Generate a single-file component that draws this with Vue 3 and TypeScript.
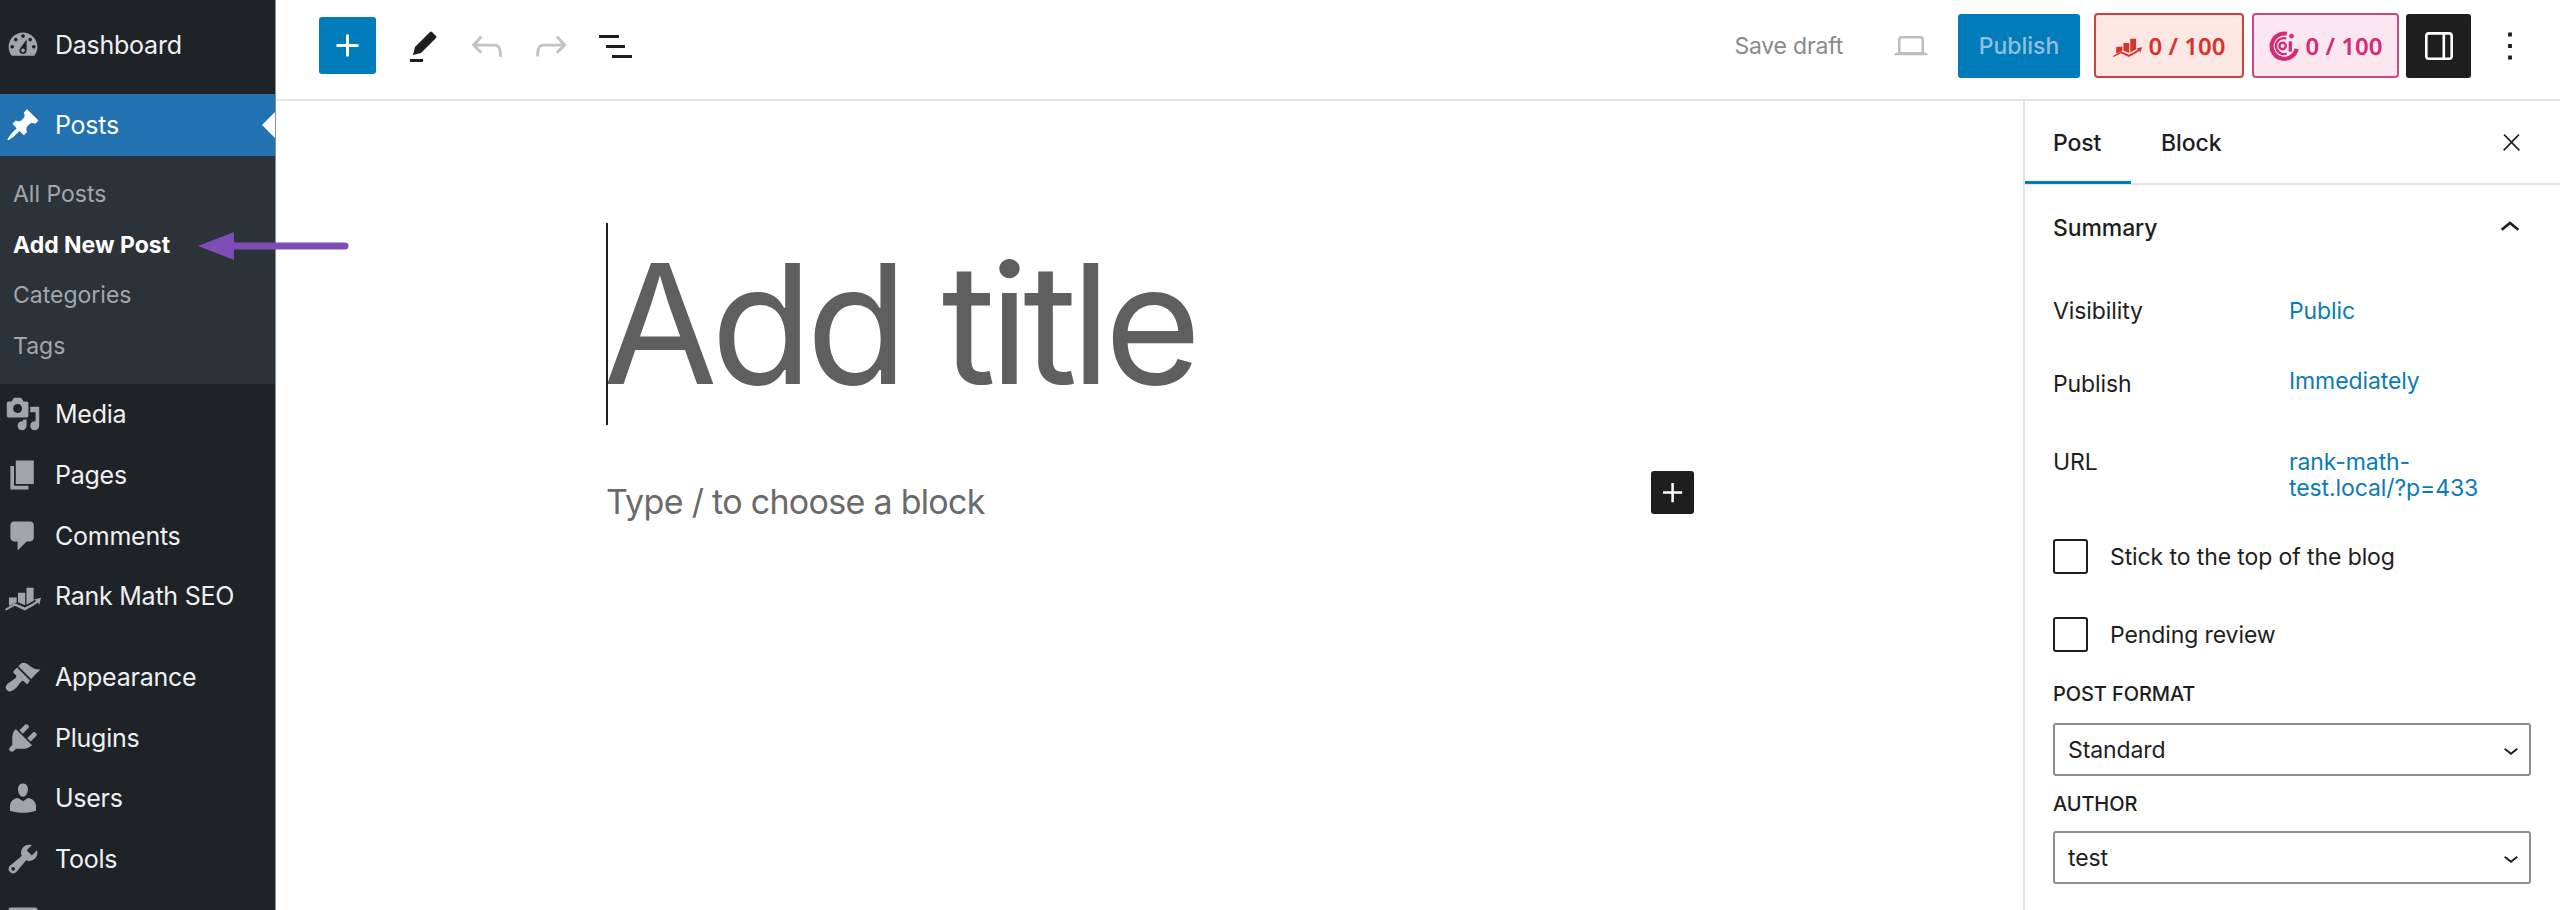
<script setup lang="ts">
interface MenuItem {
  label: string
  path: string
}

const rankPath =
  'M0 17.2L5.500 14l5.500 2.400L15.600 14l1.700-1.400-1.300-.600 4-1-1 4-.8-1.400-2.400 1.800L11 18l-5.500-2.600L.5 18zM2.200 10.900h4.300v2.600l-4.300 2zM7.200 8.200h4v7l-4-1.700zM11.900 5.400h4v7.200l-4 2.200z'

const groupA: MenuItem[] = [
  {
    label: 'Media',
    path: 'M13 11V4c0-.55-.45-1-1-1h-1.67L9 1H5L3.67 3H2c-.55 0-1 .45-1 1v7c0 .55.45 1 1 1h10c.55 0 1-.45 1-1zM7 4.5c1.38 0 2.5 1.12 2.5 2.5S8.38 9.5 7 9.5 4.5 8.38 4.5 7 5.62 4.5 7 4.5zM14 6h5v10.5c0 1.38-1.12 2.5-2.5 2.5S14 17.88 14 16.5s1.12-2.5 2.5-2.5c.17 0 .34.02.5.05V9h-3V6zm-4 8.05V13h2v3.5c0 1.38-1.12 2.5-2.5 2.5S7 17.88 7 16.5 8.12 14 9.500 14c.17 0 .34.02.5.05z',
  },
  { label: 'Pages', path: 'M6 15V2h10v13H6zm-1 1h8v2H3V5h2v11z' },
  {
    label: 'Comments',
    path: 'M5 2h9c1.1 0 2 .9 2 2v7c0 1.1-.9 2-2 2h-2l-5 5v-5H5c-1.1 0-2-.9-2-2V4c0-1.1.9-2 2-2z',
  },
  { label: 'Rank Math SEO', path: rankPath },
]

const groupB: MenuItem[] = [
  {
    label: 'Appearance',
    path: 'M14.48 11.06L7.41 3.99l1.5-1.5c.5-.56 2.3-.47 3.51.32 1.21.8 1.43 1.28 2.91 2.1 1.18.64 2.45 1.26 4.45.85zm-.71.71L6.7 4.7 4.93 6.47c-.39.39-.39 1.02 0 1.41l1.06 1.06c.39.39.39 1.03 0 1.42-.6.6-1.43 1.11-2.21 1.69-.35.26-.7.53-1.01.84C1.43 13.23.4 14.99.4 16c0 .47.27.97.66 1.37s.9.66 1.37.66c1.01 0 2.77-1.03 4.11-2.37.31-.31.58-.66.84-1.01.58-.78 1.09-1.61 1.69-2.21.39-.39 1.03-.39 1.42 0l1.06 1.06c.39.39 1.02.39 1.41 0z',
  },
  {
    label: 'Plugins',
    path: 'M13.11 4.36L9.87 7.6 8 5.73l3.24-3.24c.35-.34 1.05-.2 1.56.32.52.51.66 1.21.31 1.55zm-8 1.77l.91-1.12 9.01 9.01-1.19.84c-.71.71-2.63 1.16-3.82 1.16H6.14L4.9 17.26c-.59.59-1.54.59-2.12 0-.59-.58-.59-1.53 0-2.12l1.24-1.24v-3.88c0-1.13.4-3.19 1.09-3.89zm7.26 3.97l3.24-3.24c.34-.35 1.04-.21 1.55.31.52.51.66 1.21.31 1.55l-3.24 3.25z',
  },
  {
    label: 'Users',
    path: 'M10 9.25c-2.27 0-2.73-3.44-2.73-3.44C7 4.02 7.82 2 9.97 2c2.16 0 2.98 2.02 2.71 3.81 0 0-.41 3.44-2.68 3.44zm0 2.57L12.72 10c2.39 0 4.52 2.33 4.52 4.53v2.49s-3.65 1.13-7.24 1.13c-3.65 0-7.24-1.13-7.24-1.13v-2.49c0-2.25 1.94-4.48 4.47-4.48z',
  },
  {
    label: 'Tools',
    path: 'M16.68 9.77c-1.34 1.34-3.3 1.67-4.95.99l-5.41 6.52c-.99.99-2.59.99-3.58 0s-.99-2.59 0-3.57l6.52-5.42c-.68-1.65-.35-3.61.99-4.95 1.28-1.28 3.12-1.62 4.72-1.06l-2.89 2.89 2.82 2.82 2.86-2.87c.53 1.58.18 3.39-1.08 4.65zM3.81 16.21c.4.39 1.04.39 1.43 0 .4-.4.4-1.04 0-1.43-.39-.4-1.03-.4-1.43 0-.39.39-.39 1.03 0 1.43z',
  },
  // only the top of this icon shows above the fold
  {
    label: '',
    path: 'M18 16V4c0-.55-.45-1-1-1H3c-.55 0-1 .45-1 1v12c0 .55.45 1 1 1h14c.55 0 1-.45 1-1z',
  },
]

const dashboardPath =
  'M3.76 16h12.48c1.1-1.37 1.76-3.11 1.76-5 0-4.42-3.58-8-8-8s-8 3.58-8 8c0 1.89.66 3.63 1.76 5zM10 4c.55 0 1 .45 1 1s-.45 1-1 1-1-.45-1-1 .45-1 1-1zM6 6c.55 0 1 .45 1 1s-.45 1-1 1-1-.45-1-1 .45-1 1-1zm8 0c.55 0 1 .45 1 1s-.45 1-1 1-1-.45-1-1 .45-1 1-1zm-5.37 5.55L12 7v6c0 1.1-.9 2-2 2s-2-.9-2-2c0-.57.24-1.08.63-1.45zM4 10c.55 0 1 .45 1 1s-.45 1-1 1-1-.45-1-1 .45-1 1-1zm12 0c.55 0 1 .45 1 1s-.45 1-1 1-1-.45-1-1 .45-1 1-1zm-5 3c0-.55-.45-1-1-1s-1 .45-1 1 .45 1 1 1 1-.45 1-1z'
const pinPath =
  'M10.44 3.02l1.82-1.82 6.36 6.35-1.83 1.82c-1.05-.68-2.48-.57-3.41.36l-.75.75c-.92.93-1.04 2.35-.35 3.41l-1.83 1.82-2.41-2.41-2.8 2.79c-.42.42-3.38 2.71-3.8 2.29s1.86-3.39 2.28-3.81l2.79-2.79L4.1 9.36l1.83-1.82c1.05.69 2.48.57 3.4-.36l.75-.75c.93-.92 1.05-2.35.36-3.41z'

const subItems = ['All Posts', 'Add New Post', 'Categories', 'Tags']
</script>

<template>
  <div class="page">
    <aside class="adminbar">
      <a class="item first">
        <svg class="dash" viewBox="0 0 20 20"><path fill-rule="evenodd" :d="dashboardPath" /></svg>
        <span>Dashboard</span>
      </a>
      <a class="item current">
        <svg class="dash" viewBox="0 0 20 20"><path :d="pinPath" /></svg>
        <span>Posts</span>
      </a>
      <ul class="submenu">
        <li v-for="s in subItems" :key="s" :class="{ on: s === 'Add New Post' }">{{ s }}</li>
      </ul>
      <a v-for="m in groupA" :key="m.label" class="item">
        <svg class="dash" viewBox="0 0 20 20"><path :d="m.path" /></svg>
        <span>{{ m.label }}</span>
      </a>
      <div class="sep"></div>
      <a v-for="m in groupB" :key="m.label" class="item">
        <svg class="dash" viewBox="0 0 20 20"><path :d="m.path" /></svg>
        <span v-if="m.label">{{ m.label }}</span>
      </a>
    </aside>

    <!-- callout arrow over the admin menu -->
    <svg class="callout" width="160" height="30" viewBox="0 0 160 30">
      <path d="M1 15 L37 1 V11.5 H148 a3.5 3.5 0 0 1 0 7 H37 V29 Z" fill="#7b4db5" />
    </svg>

    <div class="editor">
      <header class="topbar">
        <div class="tools">
          <button class="inserter">
            <svg viewBox="0 0 24 24" width="46" height="46"><path d="M11 12.5V17.5H12.5V12.5H17.5V11H12.5V6H11V11H6V12.5H11Z" fill="#fff" /></svg>
          </button>
          <svg class="pen" viewBox="0 0 46 46" width="46" height="46">
            <path d="M15 24 L30 9 Q31 8 32 9 L36 13 Q37 14 36 15 L21 30 L13 32 Z" fill="#1e1e1e" />
            <rect x="10" y="36" width="13" height="3" fill="#1e1e1e" />
          </svg>
          <svg viewBox="0 0 24 24" width="46" height="46"><path fill="#c2c2c2" d="M18.3 11.7c-.6-.6-1.4-.9-2.3-.9H6.7l2.9-3.3-1.1-1-4.5 5L8.5 16l1-1-2.7-2.7H16c.5 0 .9.2 1.3.5 1 1 1 3.4 1 4.5v.3h1.5v-.2c0-1.5 0-4.3-1.5-5.7z" /></svg>
          <svg viewBox="0 0 24 24" width="46" height="46"><path fill="#c2c2c2" d="M15.6 6.5l-1.1 1 2.9 3.3H8c-.9 0-1.7.3-2.3.9-1.4 1.5-1.4 4.2-1.4 5.6v.2h1.5v-.3c0-1.1 0-3.5 1-4.5.3-.3.7-.5 1.3-.5h9.2L14.5 15l1.1 1.1 4.6-4.6-4.6-5z" /></svg>
          <svg viewBox="0 0 46 46" width="46" height="46">
            <rect x="7" y="12" width="20" height="3" fill="#1e1e1e" />
            <rect x="14" y="22" width="19" height="3" fill="#1e1e1e" />
            <rect x="20" y="32" width="20" height="3" fill="#1e1e1e" />
          </svg>
        </div>
        <div class="actions">
          <span class="save">Save draft</span>
          <svg class="laptop" viewBox="0 0 24 24" width="40" height="40"><path fill="#bdbdbd" d="M20.5 16h-.7V8c0-1.1-.9-2-2-2H6.2c-1.1 0-2 .9-2 2v8h-.7c-.8 0-1.5.7-1.5 1.5h20c0-.8-.7-1.5-1.5-1.5zM5.7 8c0-.3.2-.5.5-.5h11.6c.3 0 .5.2.5.5v7.6H5.7V8z" /></svg>
          <button class="publish">Publish</button>
          <div class="score seo">
            <svg viewBox="0 0 20 20" width="29" height="29"><path :d="rankPath" /></svg>
            <span>0 / 100</span>
          </div>
          <div class="score ai">
            <svg viewBox="0 0 32 32" width="30" height="30">
              <path d="M19 3 A13.500 13.500 0 1 0 29.500 19" fill="none" stroke="currentColor" stroke-width="4.400" />
              <path d="M18.500 8 A8.500 8.500 0 1 0 19 24" fill="none" stroke="currentColor" stroke-width="2.400" />
              <circle cx="14.500" cy="16" r="3.400" fill="none" stroke="currentColor" stroke-width="2.600" />
              <rect x="21" y="11" width="3.400" height="11" fill="currentColor" />
              <circle cx="24" cy="5.500" r="2.500" fill="currentColor" />
            </svg>
            <span>0 / 100</span>
          </div>
          <button class="drawer">
            <svg viewBox="0 0 24 24" width="42" height="42"><path fill="#fff" fill-rule="evenodd" d="M18 4H6c-1.1 0-2 .9-2 2v12c0 1.1.9 2 2 2h12c1.1 0 2-.9 2-2V6c0-1.1-.9-2-2-2zm-4 14.5H6c-.3 0-.5-.2-.5-.5V6c0-.3.2-.5.5-.5h8v13zm4.500-.5c0 .3-.2.5-.5.5h-2.500v-13H18c.3 0 .5.2.5.5v12z" /></svg>
          </button>
          <svg class="more" viewBox="0 0 24 24" width="46" height="46"><path fill="#1e1e1e" d="M13 19h-2v-2h2v2zm0-6h-2v-2h2v2zm0-6h-2V5h2v2z" /></svg>
        </div>
      </header>

      <div class="body">
        <main class="canvas">
          <div class="title"><span class="caret"></span>Add title</div>
          <div class="para">
            <span class="hint">Type / to choose a block</span>
            <button class="add">
              <svg viewBox="0 0 24 24" width="40" height="40"><path d="M11 12.5V17.5H12.5V12.5H17.5V11H12.5V6H11V11H6V12.5H11Z" fill="#fff" /></svg>
            </button>
          </div>
        </main>

        <aside class="panel">
          <div class="tabs">
            <span class="tab active">Post</span>
            <span class="tab">Block</span>
            <svg class="close" viewBox="0 0 24 24" width="27" height="27"><path fill="#1e1e1e" d="M13 11.800l6.100-6.300-1-1-6.100 6.200-6.100-6.200-1 1 6.100 6.300-6.500 6.700 1 1 6.500-6.600 6.500 6.600 1-1z" /></svg>
          </div>
          <div class="section">
            <div class="sec-head">
              <span>Summary</span>
              <svg viewBox="0 0 24 24" width="40" height="40"><path fill="#1e1e1e" d="M6.500 12.400L12 8l5.500 4.400-.9 1.200L12 10l-4.500 3.600-1-1.200z" /></svg>
            </div>
            <div class="row vis"><span class="key">Visibility</span><a class="val">Public</a></div>
            <div class="row pub"><span class="key">Publish</span><a class="val up">Immediately</a></div>
            <div class="row url"><span class="key">URL</span><a class="val">rank-math-<br />test.local/?p=433</a></div>
            <label class="check"><span class="box"></span>Stick to the top of the blog</label>
            <label class="check second"><span class="box"></span>Pending review</label>
            <div class="cap">POST FORMAT</div>
            <div class="select">
              <span>Standard</span>
              <svg viewBox="0 0 24 24" width="30" height="30"><path fill="#1e1e1e" d="M17.500 11.600L12 16l-5.500-4.400.9-1.200L12 14l4.500-3.600 1 1.200z" /></svg>
            </div>
            <div class="cap author">AUTHOR</div>
            <div class="select">
              <span>test</span>
              <svg viewBox="0 0 24 24" width="30" height="30"><path fill="#1e1e1e" d="M17.500 11.600L12 16l-5.500-4.400.9-1.200L12 14l4.500-3.600 1 1.200z" /></svg>
            </div>
          </div>
        </aside>
      </div>
    </div>
  </div>
</template>

<style>
html,
body {
  margin: 0;
  background: #fff;
  overflow: hidden;
}
</style>

<style scoped>
.page {
  display: flex;
  position: relative;
  width: 2560px;
  height: 910px;
  overflow: hidden;
  font-family: Inter, "Liberation Sans", sans-serif;
  color: #1e1e1e;
}

/* ── Admin menu ─────────────────────────────────────────────────────────── */
.adminbar {
  width: 276px;
  flex: none;
  background: #1d2327;
  border-right: 1px solid #8b8f94;
  box-sizing: border-box;
  overflow: hidden;
}

.item {
  display: flex;
  align-items: center;
  height: 60.67px;
  padding-left: 5px;
  font-size: 25px;
  letter-spacing: -0.25px;
  color: #f0f0f1;
}

.item.first {
  margin: 15px 0 19px;
  height: 60px;
}

.item.current {
  position: relative;
  height: 62px;
  background: #2271b1;
  color: #fff;
}

.item.current .dash {
  fill: #fff;
}

.item.current::after {
  content: '';
  position: absolute;
  right: -1px;
  top: 50%;
  margin-top: -14px;
  border: 14px solid transparent;
  border-right-color: #fff;
  border-left-width: 0;
}

.dash {
  width: 36px;
  height: 36px;
  margin-right: 14px;
  flex: none;
  fill: #a0a5aa;
}

.submenu {
  list-style: none;
  margin: 0;
  padding: 13px 0;
  background: #2c3338;
}

.submenu li {
  height: 50.5px;
  line-height: 50.5px;
  padding-left: 13px;
  font-size: 23px;
  color: #a3a7ab;
}

.submenu li.on {
  color: #fff;
  font-weight: 700;
}

.sep {
  height: 20px;
}

.callout {
  position: absolute;
  left: 197px;
  top: 231px;
}

/* ── Top bar ────────────────────────────────────────────────────────────── */
.editor {
  flex: 1;
  min-width: 0;
  display: flex;
  flex-direction: column;
}

.topbar {
  height: 101px;
  flex: none;
  box-sizing: border-box;
  border-bottom: 2px solid #e4e4e4;
  display: flex;
  align-items: center;
  justify-content: space-between;
  padding: 0 27px 8px 43px;
}

.tools,
.actions {
  display: flex;
  align-items: center;
}

.tools {
  gap: 18px;
}

.tools svg {
  display: block;
}

.inserter {
  width: 57px;
  height: 57px;
  padding: 0;
  border: 0;
  border-radius: 3px;
  background: #007cba;
  display: flex;
  align-items: center;
  justify-content: center;
  margin-right: 6px;
}

.save {
  font-size: 23px;
  letter-spacing: -0.2px;
  color: #8a8a8a;
  margin-right: 48px;
}

.laptop {
  margin-right: 27px;
}

.publish {
  width: 122px;
  height: 64px;
  border: 0;
  border-radius: 3px;
  background: #007cba;
  color: #8fbfe0;
  font: 500 23px Inter, sans-serif;
  margin-right: 14px;
}

.score {
  display: flex;
  align-items: center;
  justify-content: center;
  gap: 7px;
  width: 150px;
  height: 65px;
  box-sizing: border-box;
  border: 2px solid;
  border-radius: 4px;
  font: 600 24px "Noto Sans", sans-serif;
}

.score.seo {
  background: #fde7e5;
  border-color: #c8443d;
  color: #d9322b;
  fill: #d9322b;
  margin-right: 8px;
}

.score.ai {
  width: 147px;
  background: #fce7f0;
  border-color: #c84a85;
  color: #d62a74;
  margin-right: 7px;
}

.drawer {
  width: 65px;
  height: 64px;
  padding: 0;
  border: 0;
  border-radius: 3px;
  background: #1e1e1e;
  display: flex;
  align-items: center;
  justify-content: center;
  margin-right: 16px;
}

/* ── Canvas ─────────────────────────────────────────────────────────────── */
.body {
  flex: 1;
  min-height: 0;
  display: flex;
}

.canvas {
  flex: 1;
  min-width: 0;
  padding: 122px 0 0 330px;
}

.title {
  position: relative;
  font-size: 166px;
  line-height: 202px;
  letter-spacing: -6.5px;
  text-indent: -3px;
  color: #5f5f5f;
  white-space: nowrap;
}

.caret {
  position: absolute;
  left: 0;
  top: 0;
  width: 2px;
  height: 202px;
  background: #1e1e1e;
}

.para {
  display: flex;
  align-items: flex-start;
  justify-content: space-between;
  width: 1088px;
  margin-top: 46px;
}

.hint {
  margin-top: 10px;
  font-size: 34px;
  letter-spacing: -0.7px;
  color: #6a6a6a;
}

.add {
  width: 43px;
  height: 43px;
  padding: 0;
  border: 0;
  border-radius: 3px;
  background: #1e1e1e;
  display: flex;
  align-items: center;
  justify-content: center;
}

/* ── Settings panel ─────────────────────────────────────────────────────── */
.panel {
  width: 537px;
  flex: none;
  box-sizing: border-box;
  border-left: 2px solid #e4e4e4;
  font-size: 23px;
  letter-spacing: -0.1px;
}

.tabs {
  display: flex;
  align-items: center;
  height: 84px;
  box-sizing: border-box;
  border-bottom: 2px solid #e4e4e4;
}

.tab {
  font-weight: 500;
  line-height: 87px;
  padding: 0 30px;
  height: 84px;
  box-sizing: border-box;
}

.tab.active {
  width: 106px;
  padding: 0 28px;
  border-bottom: 3px solid #007cba;
}

.close {
  margin-left: auto;
  margin-right: 35px;
}

.section {
  padding: 0 29px 0 28px;
}

.sec-head {
  display: flex;
  align-items: center;
  justify-content: space-between;
  height: 85px;
  font-weight: 500;
  padding-right: 1px;
}

.row {
  display: grid;
  grid-template-columns: 236px 1fr;
  line-height: 26px;
}

.row.vis {
  margin-top: 28px;
}

.row.pub {
  margin-top: 47px;
}

.row.url {
  margin-top: 52px;
}

.val {
  color: #0a7cb5;
}

.val.up {
  margin-top: -3px;
}

.check {
  display: flex;
  align-items: center;
  height: 35px;
  margin-top: 38px;
}

.check.second {
  margin-top: 43px;
}

.box {
  width: 35px;
  height: 35px;
  box-sizing: border-box;
  border: 2px solid #1e1e1e;
  border-radius: 3px;
  margin-right: 22px;
}

.cap {
  font-size: 20px;
  font-weight: 500;
  line-height: 26px;
  margin-top: 29px;
  margin-bottom: 16px;
}

.cap.author {
  margin-top: 15px;
  margin-bottom: 14px;
}

.select {
  display: flex;
  align-items: center;
  justify-content: space-between;
  height: 53px;
  box-sizing: border-box;
  border: 2px solid #8d8d8d;
  border-radius: 3px;
  padding: 0 3px 0 13px;
}
</style>
